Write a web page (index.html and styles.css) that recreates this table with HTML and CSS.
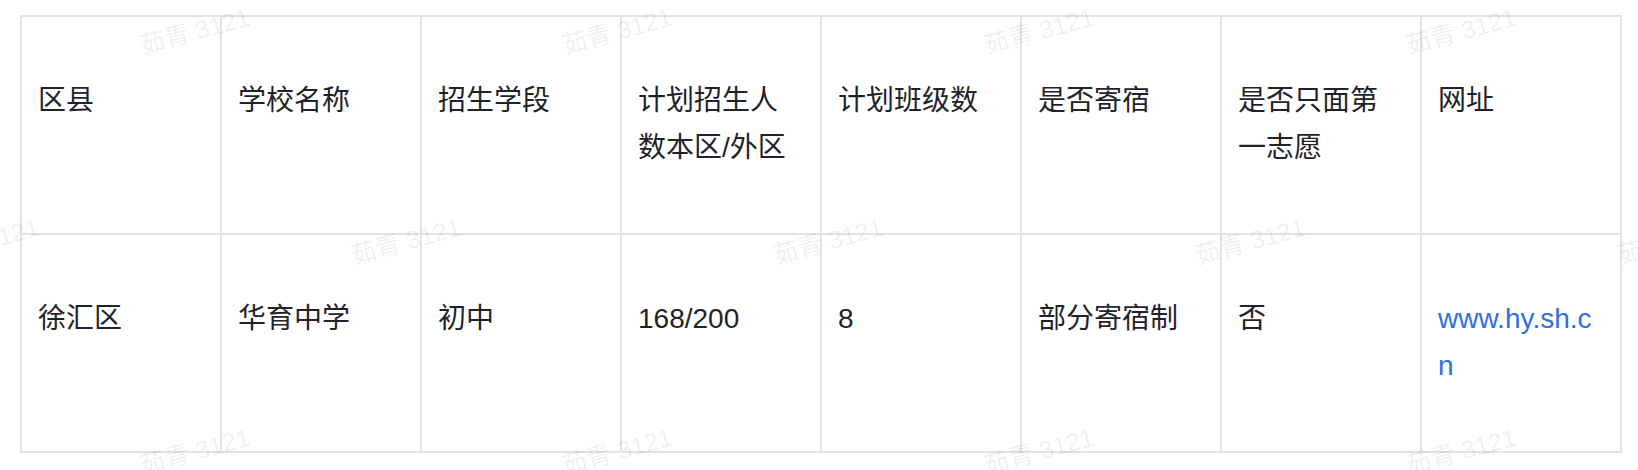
FILE: index.html
```html
<!DOCTYPE html>
<html lang="zh-CN">
<head>
<meta charset="utf-8">
<title>招生计划</title>
<link rel="stylesheet" href="styles.css">
</head>
<body>
<div class="page">
  <table class="plan">
    <colgroup>
      <col class="col"><col class="col"><col class="col"><col class="col"><col class="col"><col class="col"><col class="col"><col class="col">
    </colgroup>
    <thead>
      <tr>
        <th>区县</th>
        <th>学校名称</th>
        <th>招生学段</th>
        <th>计划招生人数本区/外区</th>
        <th>计划班级数</th>
        <th>是否寄宿</th>
        <th>是否只面第一志愿</th>
        <th>网址</th>
      </tr>
    </thead>
    <tbody>
      <tr>
        <td>徐汇区</td>
        <td>华育中学</td>
        <td>初中</td>
        <td>168/200</td>
        <td>8</td>
        <td>部分寄宿制</td>
        <td>否</td>
        <td><a class="link" href="#">www.hy.sh.cn</a></td>
      </tr>
    </tbody>
  </table>
</div>
<div class="watermarks" aria-hidden="true">
  <div class="wm-row wm-row-a">
    <span class="wm">茹青 3121</span><span class="wm">茹青 3121</span><span class="wm">茹青 3121</span><span class="wm">茹青 3121</span>
  </div>
  <div class="wm-row wm-row-b">
    <span class="wm">茹青 3121</span><span class="wm">茹青 3121</span><span class="wm">茹青 3121</span><span class="wm">茹青 3121</span><span class="wm">茹青 3121</span>
  </div>
  <div class="wm-row wm-row-a">
    <span class="wm">茹青 3121</span><span class="wm">茹青 3121</span><span class="wm">茹青 3121</span><span class="wm">茹青 3121</span>
  </div>
</div>
</body>
</html>
```

FILE: styles.css
```css
html, body {
  margin: 0;
  padding: 0;
  background: #ffffff;
}

body {
  font-family: "Liberation Sans", "Noto Sans CJK SC", sans-serif;
  color: #1f2329;
  width: 1638px;
  height: 470px;
  overflow: hidden;
  position: relative;
}

.page {
  padding: 15px 0 0 20px;
}

.plan {
  border-collapse: collapse;
  table-layout: fixed;
  width: 1602px;
}

.col {
  width: 200px;
}

.plan th,
.plan td {
  box-sizing: border-box;
  border: 2px solid #e3e3e3;
  padding: 61.33px 16px;
  font-size: 28px;
  line-height: 46.67px;
  font-weight: 400;
  text-align: left;
  vertical-align: top;
  word-break: break-all;
}

.link {
  color: #2f6fe2;
  text-decoration: none;
}

.watermarks {
  position: absolute;
  inset: 0;
  overflow: hidden;
  pointer-events: none;
  display: flex;
  flex-direction: column;
  margin-top: -74px;
}

.wm-row {
  display: flex;
  flex: none;
  height: 210px;
  align-items: center;
}

.wm-row-a {
  margin-left: -16px;
}

.wm-row-b {
  margin-left: -227px;
}

.wm {
  flex: none;
  width: 422px;
  text-align: center;
  font-family: "Liberation Sans", "Noto Sans CJK SC", sans-serif;
  font-size: 25px;
  line-height: 30px;
  color: rgba(0, 0, 0, 0.07);
  transform: rotate(-15deg);
  white-space: nowrap;
}
```
